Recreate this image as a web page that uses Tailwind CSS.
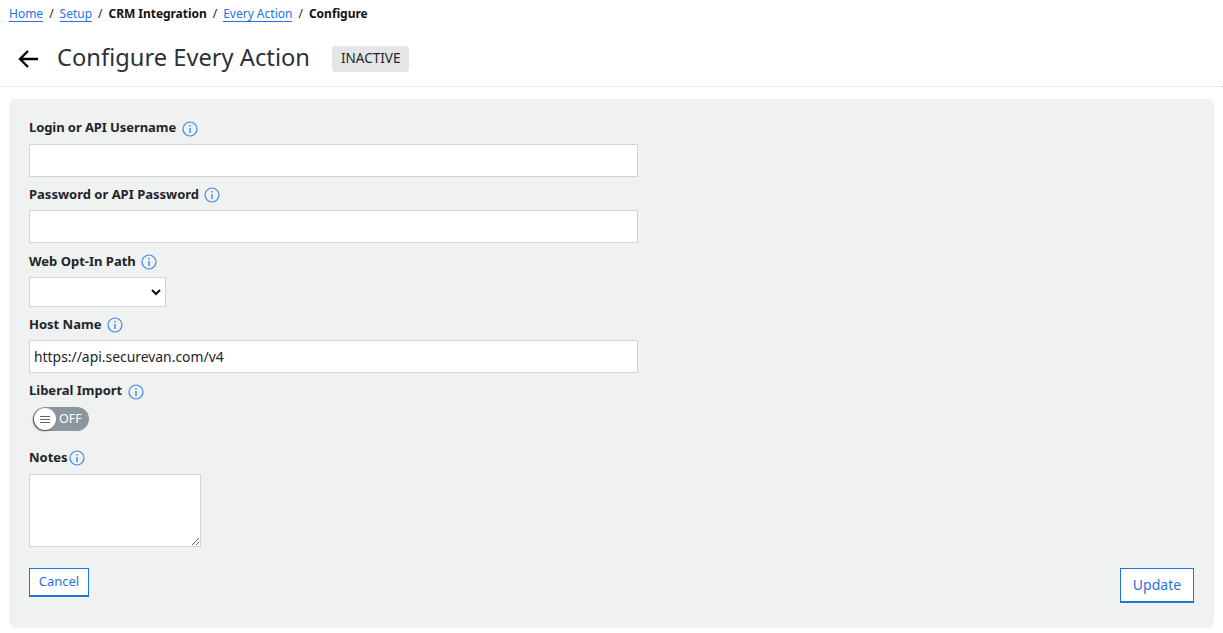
<!DOCTYPE html>
<html lang="en">
<head>
    <meta charset="UTF-8">
    <title>Configure Every Action</title>
    <script src="https://cdn.jsdelivr.net/npm/@tailwindcss/browser@4"></script>
</head>
<body class="bg-white font-['Noto_Sans','Open_Sans',sans-serif] text-[#212529] h-[633px] overflow-hidden">
    <!-- breadcrumbs -->
    <nav class="flex items-center h-[28px] pl-[9px] text-[12px] text-[#212529]">
        <a class="text-[#1f74e0] border-b border-[#1f74e0] leading-[15px]">Home</a>
        <span class="mx-[6px]">/</span>
        <a class="text-[#1f74e0] border-b border-[#1f74e0] leading-[15px]">Setup</a>
        <span class="mx-[6px]">/</span>
        <span class="font-bold text-[#111] tracking-[-0.05px]">CRM Integration</span>
        <span class="mx-[6px]">/</span>
        <a class="text-[#1f74e0] border-b border-[#1f74e0] leading-[15px]">Every Action</a>
        <span class="mx-[6px]">/</span>
        <span class="font-bold text-[#111]">Configure</span>
    </nav>
    <!-- header -->
    <div class="flex items-center h-[59px] pl-[18px] border-b border-dotted border-[#d8d8d8]">
        <svg class="w-[20px] h-[18px] mr-[19px] mt-[3px]" viewBox="0 0 20 18" fill="none" stroke="#000" stroke-width="2.4"><path d="M20 9H2M10 1 2 9l8 8"/></svg>
        <h1 class="text-[23.7px] leading-none font-normal text-[#2b3238] mt-[2px]">Configure Every Action</h1>
        <span class="ml-[22px] mt-[3px] h-[26px] px-[9px] flex items-center bg-[#e4e5e6] rounded-[4px] text-[13.5px] text-[#212529]">INACTIVE</span>
    </div>
    <!-- form panel -->
    <div class="mx-[9px] mt-[12px] h-[529px] bg-[#f0f1f1] rounded-[6px] px-[20px] pt-[20px] relative">
        <div class="flex items-center h-[18px] text-[13px] font-bold text-[#212529] tracking-[-0.08px]">Login or API Username
            <svg class="w-[16px] h-[16px] ml-[6px] mt-[2px]" viewBox="0 0 16 16" fill="none" stroke="#3f8ae0" stroke-width="1.2"><circle cx="8" cy="8" r="7"/><path d="M8 7v5M8 4v1.5" stroke-width="1.4"/></svg>
        </div>
        <input type="text" class="block mt-[7px] w-[609px] h-[33px] bg-white border border-[#d2d3d3] px-[4px] text-[14px]">
        <div class="flex items-center h-[18px] mt-[9px] text-[13px] font-bold text-[#212529]">Password or API Password
            <svg class="w-[16px] h-[16px] ml-[5px]" viewBox="0 0 16 16" fill="none" stroke="#3f8ae0" stroke-width="1.2"><circle cx="8" cy="8" r="7"/><path d="M8 7v5M8 4v1.5" stroke-width="1.4"/></svg>
        </div>
        <input type="text" class="block mt-[6px] w-[609px] h-[33px] bg-white border border-[#d2d3d3] px-[4px] text-[14px]">
        <div class="flex items-center h-[18px] mt-[10px] text-[13px] font-bold text-[#212529]">Web Opt-In Path
            <svg class="w-[16px] h-[16px] ml-[5px]" viewBox="0 0 16 16" fill="none" stroke="#3f8ae0" stroke-width="1.2"><circle cx="8" cy="8" r="7"/><path d="M8 7v5M8 4v1.5" stroke-width="1.4"/></svg>
        </div>
        <div class="relative mt-[6px] w-[137px] h-[30px] bg-white border border-[#d2d3d3]">
            <svg class="absolute right-[4px] top-[11px] w-[10px] h-[7px]" viewBox="0 0 10 7" fill="none" stroke="#111" stroke-width="2"><path d="M1 1l4 4 4-4"/></svg>
        </div>
        <div class="flex items-center h-[18px] mt-[9px] text-[13px] font-bold text-[#212529]">Host Name
            <svg class="w-[16px] h-[16px] ml-[6px]" viewBox="0 0 16 16" fill="none" stroke="#3f8ae0" stroke-width="1.2"><circle cx="8" cy="8" r="7"/><path d="M8 7v5M8 4v1.5" stroke-width="1.4"/></svg>
        </div>
        <input type="text" value="https://api.securevan.com/v4" class="block mt-[6px] w-[609px] h-[33px] bg-white border border-[#d2d3d3] px-[4px] text-[13.9px] text-[#212529]">
        <div class="flex items-center h-[18px] mt-[9px] text-[13px] font-bold text-[#212529]">Liberal Import
            <svg class="w-[16px] h-[16px] ml-[6px] mt-[2px]" viewBox="0 0 16 16" fill="none" stroke="#3f8ae0" stroke-width="1.2"><circle cx="8" cy="8" r="7"/><path d="M8 7v5M8 4v1.5" stroke-width="1.4"/></svg>
        </div>
        <div class="flex items-center ml-[4px] mt-[7px] w-[56px] h-[24px] rounded-full bg-[#8b969e] relative">
            <span class="flex flex-col justify-center gap-[2px] items-center w-[22px] h-[22px] ml-[1px] rounded-full bg-white shadow-[-1px_1px_2px_rgba(0,0,0,0.5)]">
                <i class="block w-[10px] h-[1px] bg-[#666]"></i>
                <i class="block w-[10px] h-[1px] bg-[#666]"></i>
                <i class="block w-[10px] h-[1px] bg-[#666]"></i>
            </span>
            <span class="ml-[3px] text-[12.5px] text-white">OFF</span>
        </div>
        <div class="flex items-center h-[18px] mt-[18px] text-[13px] font-bold text-[#212529]">Notes
            <svg class="w-[16px] h-[16px] ml-[1px]" viewBox="0 0 16 16" fill="none" stroke="#3f8ae0" stroke-width="1.2"><circle cx="8" cy="8" r="7"/><path d="M8 7v5M8 4v1.5" stroke-width="1.4"/></svg>
        </div>
        <textarea class="block mt-[7px] w-[172px] h-[73px] bg-white border border-[#d2d3d3] text-[14px]"></textarea>
        <div class="flex justify-between items-start mt-[21px]">
            <button class="w-[60px] h-[29px] bg-white border border-[#1f74e0] border-b-2 text-[13px] text-[#1f74e0]">Cancel</button>
            <button class="w-[74px] h-[35px] pb-[2px] bg-white border border-[#1f74e0] border-b-2 text-[14px] text-[#1f74e0]">Update</button>
        </div>
    </div>
</body>
</html>
